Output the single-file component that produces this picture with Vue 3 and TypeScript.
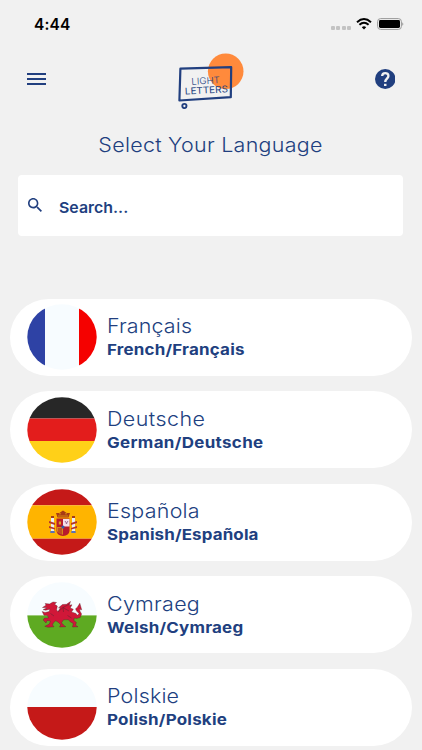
<script setup lang="ts">
interface Language {
  code: string
  name: string
  label: string
  nameSpacing: number
  labelSpacing: number
}

const languages: Language[] = [
  { code: 'fr', name: 'Français', label: 'French/Français', nameSpacing: 0.12, labelSpacing: 0.18 },
  { code: 'de', name: 'Deutsche', label: 'German/Deutsche', nameSpacing: 0.4, labelSpacing: 0.3 },
  { code: 'es', name: 'Española', label: 'Spanish/Española', nameSpacing: 0.23, labelSpacing: 0.12 },
  { code: 'cy', name: 'Cymraeg', label: 'Welsh/Cymraeg', nameSpacing: 0.25, labelSpacing: 0.18 },
  { code: 'pl', name: 'Polskie', label: 'Polish/Polskie', nameSpacing: 0.17, labelSpacing: 0.2 },
]
</script>

<template>
  <main class="screen">
    <div class="status">
      <span class="time">4:44</span>
      <div class="indicators">
        <span class="signal"><i v-for="n in 4" :key="n" /></span>
        <svg class="wifi" viewBox="0 0 16 12">
          <path d="M1 4.2Q8-2.1 15 4.2" />
          <path d="M3.4 6.8Q8 2.7 12.6 6.8" />
          <path class="wifi-dot" d="M5.8 9.2Q8 7.3 10.2 9.2L8 11.5Z" />
        </svg>
        <svg class="battery" viewBox="0 0 27 12">
          <rect class="shell" x=".6" y=".6" width="23.8" height="10.8" rx="3" />
          <rect x="2" y="2" width="21" height="8" rx="1.4" />
          <path class="cap" d="M25.4 4.2q1.8 1.8 0 3.6z" />
        </svg>
      </div>
    </div>

    <header class="bar">
      <button class="icon-button menu" aria-label="Menu"><i /><i /><i /></button>
      <svg class="logo" viewBox="-1 -1 70 60">
        <circle cx="49.7" cy="21.3" r="17.8" fill="#ff8a3c" />
        <path class="frame" d="M4.4 18.7 55.2 17.2 54.8 47.2 3.4 50.5Z" />
        <circle class="wheel" cx="8.4" cy="56" r="2.1" />
        <g transform="rotate(-3 30 35)">
          <text class="logo-light" x="15.5" y="34" textLength="28.5" lengthAdjust="spacingAndGlyphs">LIGHT</text>
          <text class="logo-bold" x="8.6" y="43.4" textLength="43" lengthAdjust="spacingAndGlyphs">LETTERS</text>
        </g>
      </svg>
      <button class="icon-button help" aria-label="Help">
        <svg viewBox="2 2 20 20" preserveAspectRatio="none">
          <circle cx="12" cy="12" r="10" />
          <path d="M9 9.1C9 5 15.1 5.1 15.1 8.9c0 2.6-3.1 2.9-3.1 6" />
          <rect x="10.8" y="16.8" width="2.4" height="2.2" />
        </svg>
      </button>
    </header>

    <h1 class="title">Select Your Language</h1>

    <label class="search">
      <svg viewBox="3 3 17.5 17.5">
        <path d="M15.5 14h-.79l-.28-.27C15.41 12.59 16 11.11 16 9.5 16 5.91 13.09 3 9.5 3S3 5.91 3 9.5 5.91 16 9.5 16c1.61 0 3.09-.59 4.23-1.57l.27.28v.79l5 4.99L20.49 19l-4.99-5zm-6 0C7.01 14 5 11.99 5 9.5S7.01 5 9.5 5 14 7.01 14 9.5 11.99 14 9.5 14z" />
      </svg>
      <span>Search...</span>
    </label>

    <ul class="languages">
      <li v-for="lang in languages" :key="lang.code" class="language">
        <svg class="flag" viewBox="0 0 70 66">
          <defs>
            <clipPath :id="`round-${lang.code}`"><ellipse cx="35" cy="33" rx="34.7" ry="32.8" /></clipPath>
          </defs>
          <g :clip-path="`url(#round-${lang.code})`">
            <template v-if="lang.code === 'fr'">
              <rect x="18" width="34" height="66" fill="#f7fcff" />
              <rect width="18" height="66" fill="#2e42a5" />
              <rect x="52" width="18" height="66" fill="#f50100" />
            </template>
            <template v-else-if="lang.code === 'de'">
              <rect width="70" height="21.5" fill="#272727" />
              <rect y="21.5" width="70" height="22.5" fill="#e31d1c" />
              <rect y="44" width="70" height="22" fill="#ffd018" />
            </template>
            <template v-else-if="lang.code === 'es'">
              <rect width="70" height="16.3" fill="#c51918" />
              <rect y="16.3" width="70" height="33.4" fill="#ffb400" />
              <rect y="49.7" width="70" height="16.3" fill="#c51918" />
              <g>
                <path d="M24 28.5h3v14h-3zM45 28.5h3v14h-3z" fill="#e9edf2" />
                <path d="M22 32l6 2v2l-6-2zM22 37l6 2v1.5l-6-1.5zM50 32l-6 2v2l6-2zM50 37l-6 2v1.5l6-1.5z" fill="#b5352c" />
                <path d="M23.3 42h4.4v2h-4.4zM44.3 42h4.4v2h-4.4z" fill="#5a72b5" />
                <path d="M24 27h3v2h-3zM45 27h3v2h-3z" fill="#a33a1c" />
                <path d="M29.5 29.5H42.5V42Q42 46.5 36 47Q30 46.5 29.5 42Z" fill="#b81c2c" />
                <path d="M36 30h6.5v7.5H36z" fill="#f4dfea" />
                <path d="M30 38h6v7.8q-5.5-1-6-4z" fill="#d8881b" />
                <path d="M31.8 32.5h2.2v3h-2.2z" fill="#dba223" />
                <path d="M32 39v6M34 39v7" stroke="#a91c2b" />
                <path d="m38 32 2 3m1-3-2 3" stroke="#9b6790" />
                <circle cx="36" cy="38" r="1.6" fill="#3858a6" />
                <path d="M30.5 28.5 29 24l3.3 0L36 21.5l3.7 2.5 3.3 0-1.5 4.5z" fill="#a83b15" />
                <path d="M31 27h10M32 24.8h2m4 0h2" stroke="#e29a17" stroke-width=".8" />
              </g>
            </template>
            <template v-else-if="lang.code === 'cy'">
              <rect width="70" height="33.4" fill="#f7fcff" />
              <rect y="33.4" width="70" height="32.6" fill="#5eaa22" />
              <path class="dragon" d="M15.5 25.5 19 23.2 18.2 21.5 22.5 22 26 20 29.5 20.5 27.6 22.3 30.3 24 29.6 28 31 29.5 33.5 25.5 31.5 25.8 35.5 22.5 39.5 22.3 43.5 19.5 42.2 23.2 45 22.8 43.2 26 46.3 27.2 44.5 30 49 31.5 50.5 33.5 52 31.5 49.5 29 48.6 26.8 50.2 25.5 52.8 21.3 54.7 27.8 52.6 27.3 53 29.2 54.6 32 53.2 35.5 49.6 36.5 47.3 36 46.8 38.5 49.4 40.5 48.5 43.2 51 44.8 45.5 45 46.3 41.5 43.2 39.8 41.5 37.7 36.5 37.8 34.5 40.8 36.4 43 38.8 44.7 32.5 45 33.8 42.8 31.2 40.2 28.7 38.8 26.2 41 25.5 43 27 44.8 21 45.3 17.8 44.3 22.2 42.2 23.5 39 20 38.4 19 41 16.2 38 17.5 36 21.5 36 20.5 33.4 17 33.3 15.2 29.5 18 30.5 22.2 29.6 22.8 27.2 18.8 28.2 16.2 27.7 20 25.8Z" />
              <path class="dragon-lines" d="M31 30 36 25.5 36.5 30M36 25.5 42.5 22M36 25.5 42 29M23.5 31.5 27 34M40.5 33.5 44.5 36" />
            </template>
            <template v-else>
              <rect width="70" height="33" fill="#f7fcff" />
              <rect y="33" width="70" height="33" fill="#c51918" />
            </template>
          </g>
        </svg>
        <div class="text">
          <span class="name" :style="{ letterSpacing: `${lang.nameSpacing}px` }">{{ lang.name }}</span>
          <strong class="label" :style="{ letterSpacing: `${lang.labelSpacing}px` }">{{ lang.label }}</strong>
        </div>
      </li>
    </ul>
  </main>
</template>

<style>
body {
  background: #f1f1f1;
  overflow: hidden;
}
</style>

<style scoped>
.screen {
  box-sizing: border-box;
  height: 750px;
  overflow: hidden;
  background: #f1f1f1;
  color: #213f7f;
  font-family: Inter, "Open Sans", sans-serif;
}
.status {
  display: flex;
  justify-content: space-between;
  align-items: center;
  height: 48px;
  padding: 0 18px 0 34px;
  box-sizing: border-box;
}
.time {
  color: #000;
  font-size: 15.5px;
  font-weight: 600;
  letter-spacing: 0.1px;
}
.indicators {
  display: flex;
  align-items: center;
  gap: 5px;
}
.signal {
  display: flex;
  gap: 1.3px;
  padding-top: 8px;
}
.signal i {
  width: 4px;
  height: 4px;
  border-radius: 1px;
  background: #c3c3c3;
}
.wifi {
  width: 16px;
  height: 12px;
  fill: none;
  stroke: #000;
  stroke-width: 2;
}
.wifi-dot {
  fill: #000;
  stroke: none;
}
.battery {
  width: 27px;
  height: 12px;
}
.shell {
  fill: none;
  stroke: #999;
}
.cap {
  fill: #888;
}
.bar {
  display: flex;
  justify-content: space-between;
  align-items: center;
  height: 62px;
  padding: 0 27px;
}
.icon-button {
  padding: 0;
  border: 0;
  background: none;
}
.menu {
  display: grid;
  gap: 3px;
  width: 19px;
}
.menu i {
  height: 2px;
  background: #213f7f;
}
.logo {
  width: 70px;
  height: 60px;
}
.frame {
  fill: none;
  stroke: #213f7f;
  stroke-width: 2.2;
  stroke-linejoin: round;
}
.wheel {
  fill: none;
  stroke: #213f7f;
  stroke-width: 1.9;
}
.logo-light,
.logo-bold {
  fill: #213f7f;
  font-size: 9.3px;
}
.logo-light {
  font-weight: 300;
}
.help svg {
  display: block;
  width: 20.5px;
  height: 20px;
  fill: #213f7f;
}
.help path {
  fill: none;
  stroke: #f1f1f1;
  stroke-width: 2.3;
}
.help rect {
  fill: #f1f1f1;
}
.title {
  margin: 22px 0 0;
  font-size: 19.5px;
  line-height: 26px;
  font-weight: 300;
  letter-spacing: 0.25px;
  text-align: center;
  transform: translateX(-0.5px) scaleX(1.1);
}
.search {
  display: flex;
  align-items: center;
  gap: 16.5px;
  box-sizing: border-box;
  height: 61px;
  margin: 17px 19px 0 18px;
  padding: 0 10px;
  border-radius: 4px;
  background: #fff;
  font-size: 15px;
  font-weight: 600;
}
.search svg {
  width: 14px;
  height: 14px;
  margin-bottom: 1px;
  fill: #213f7f;
}
.search span {
  padding-top: 4px;
  transform: scaleX(1.06);
  transform-origin: left;
}
.languages {
  display: grid;
  gap: 15.5px;
  margin: 62.5px 10.5px 0 10px;
  padding: 0;
  list-style: none;
}
.language {
  display: flex;
  align-items: center;
  gap: 10px;
  box-sizing: border-box;
  height: 77px;
  padding-left: 17px;
  border-radius: 39px;
  background: #fff;
}
.flag {
  width: 70px;
  height: 66px;
}
.dragon {
  fill: #d01738;
  stroke: #5b2730;
  stroke-width: 0.4;
}
.dragon-lines {
  fill: none;
  stroke: #5b2730;
  stroke-width: 0.5;
}
.text {
  display: flex;
  flex-direction: column;
  align-items: flex-start;
  padding-bottom: 1px;
}
.name,
.label {
  transform-origin: left;
}
.name {
  font-size: 19.5px;
  line-height: 26px;
  font-weight: 300;
  transform: scaleX(1.1);
}
.label {
  font-size: 15px;
  line-height: 21px;
  font-weight: 700;
  transform: scaleX(1.13);
}
</style>
